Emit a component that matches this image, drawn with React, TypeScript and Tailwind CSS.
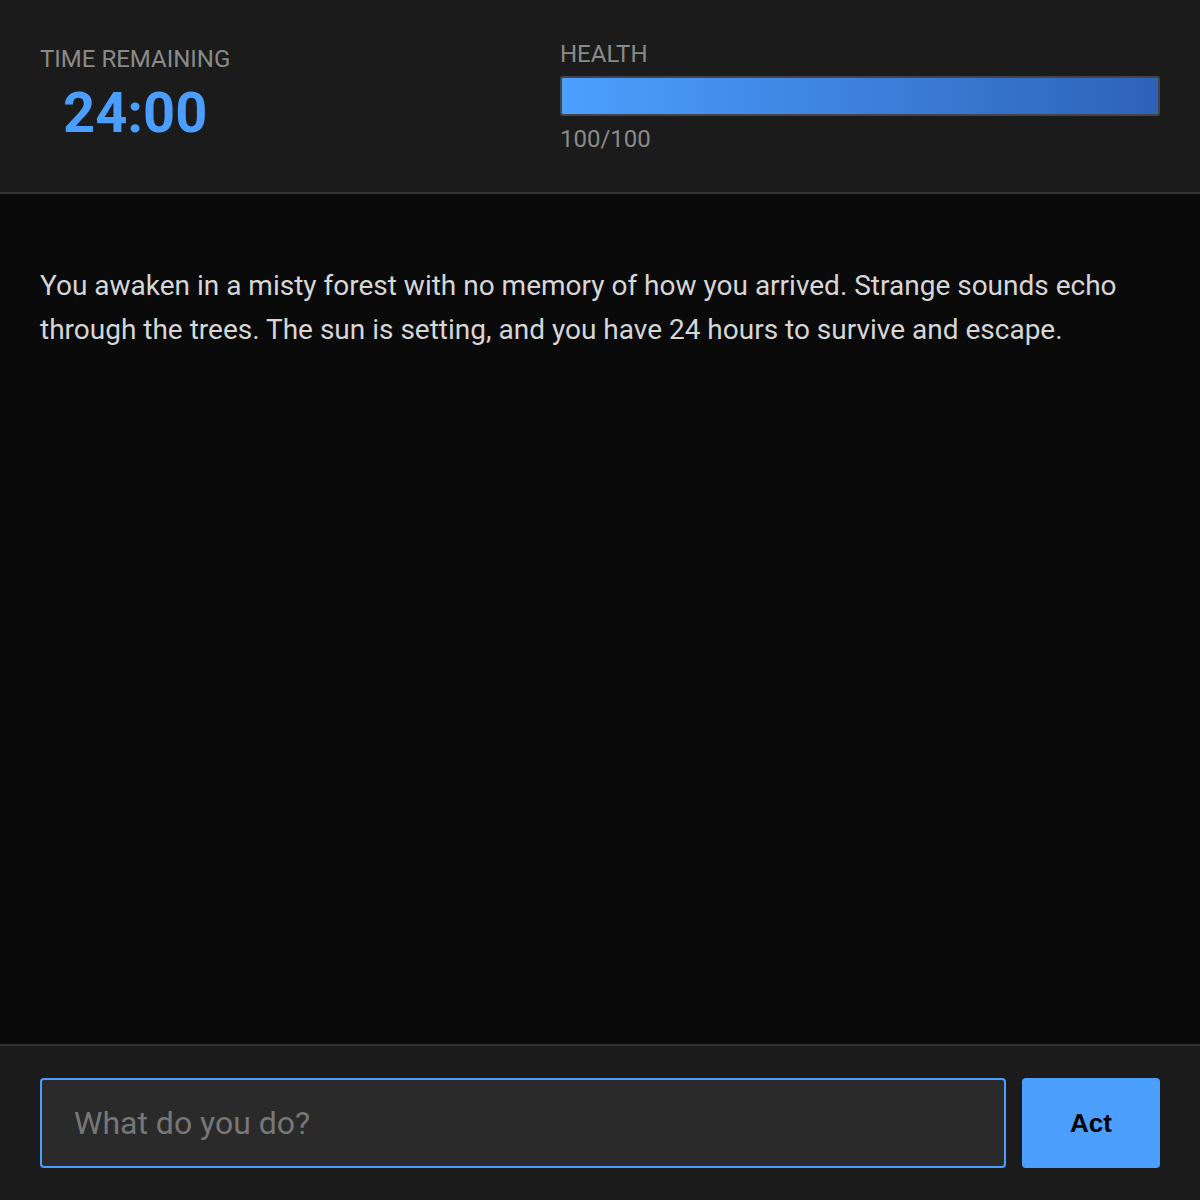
import { useState } from "react";

const STORY =
  "You awaken in a misty forest with no memory of how you arrived. Strange sounds echo through the trees. The sun is setting, and you have 24 hours to survive and escape.";

// Health bar with gradient fill
const HealthBar = ({ value, max }: { value: number; max: number }) => (
  <div className="h-[40px] w-full rounded-[3px] border-2 border-[#444] bg-[#2a2a2a] overflow-hidden">
    <div
      className="h-full bg-gradient-to-r from-[#4ca0ff] to-[#2e62b9]"
      style={{ width: `${(value / max) * 100}%` }}
    />
  </div>
);

const App = () => {
  const [action, setAction] = useState("");
  const health = 100;

  return (
    <div className="h-[1200px] flex flex-col bg-[#0a0a0a] font-['Roboto',sans-serif]">
      {/* Status header */}
      <header className="flex justify-between px-10 pt-[39px] h-[194px] bg-[#1b1b1b] border-b-2 border-[#333] flex-shrink-0">
        <div className="flex flex-col items-center">
          <span className="text-[24px] leading-[40px] text-[#8a8a8a] uppercase">time remaining</span>
          <span className="text-[56px] leading-[66px] font-bold text-[#4a9eff] mt-[1px]">24:00</span>
        </div>
        <div className="w-[600px] flex flex-col pt-[1px]">
          <span className="text-[24px] leading-[28px] text-[#8a8a8a] uppercase mb-[8px]">health</span>
          <HealthBar value={health} max={100} />
          <span className="text-[24px] leading-[30px] text-[#8a8a8a] mt-[8px]">{health}/100</span>
        </div>
      </header>

      {/* Story log */}
      <main className="flex-1 min-h-0 overflow-y-auto px-10 pt-[70px]">
        <p className="text-[28px] leading-[44px] text-[#d6d6d6]">{STORY}</p>
      </main>

      {/* Action input */}
      <footer className="flex gap-4 px-10 py-[32px] bg-[#1b1b1b] border-t-2 border-[#333] flex-shrink-0">
        <input
          autoFocus
          value={action}
          onChange={(e) => setAction(e.target.value)}
          placeholder="What do you do?"
          className="flex-1 h-[90px] px-[32px] rounded-[4px] bg-[#2a2a2a] border-2 border-[#4a9eff] text-[32px] text-[#ddd] placeholder:text-[#777] outline-none caret-white"
        />
        <button
          type="button"
          className="w-[138px] h-[90px] rounded-[4px] bg-[#4d9fff] text-[26px] font-bold text-black font-['Liberation_Sans',sans-serif]"
        >
          Act
        </button>
      </footer>
    </div>
  );
};

export default App;
